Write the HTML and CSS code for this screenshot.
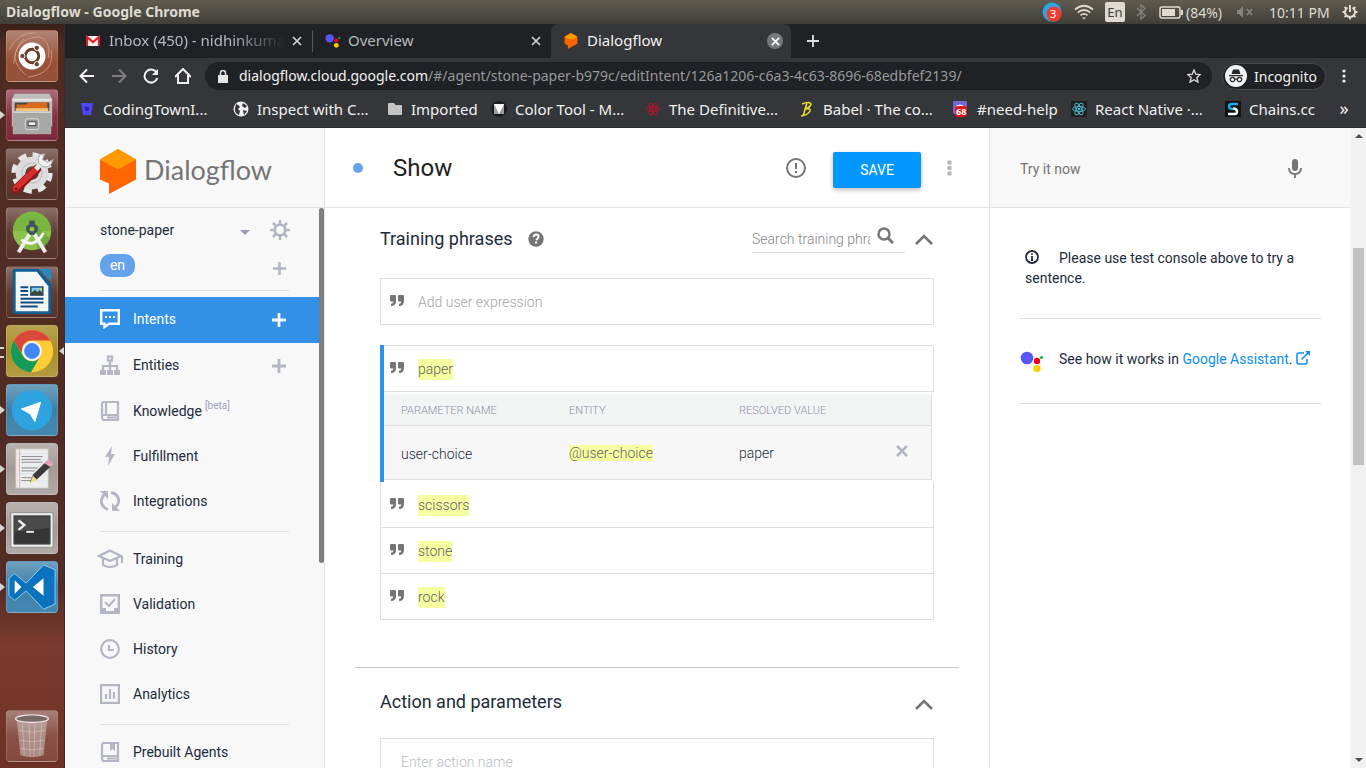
FILE: index.html
```html
<!DOCTYPE html>
<html lang="en">
<head>
<meta charset="utf-8">
<title>Dialogflow</title>
<link rel="stylesheet" href="styles.css">
</head>
<body>
<svg class="defs" aria-hidden="true">
  <defs>
    <symbol id="quote" viewBox="0 0 14 12"><path d="M1 0h4q1 0 1 1v5q0 5-5 5V8.800q2.300 0 2.300-2.300H1Q0 6.500 0 5.500V1q0-1 1-1zM9 0h4q1 0 1 1v5q0 5-5 5V8.800q2.300 0 2.300-2.300H9q-1 0-1-1V1q0-1 1-1z"/></symbol>
    <symbol id="plus" viewBox="0 0 14 14"><path d="M7 0v14M0 7h14" stroke="currentColor" stroke-width="2.800"/></symbol>
    <symbol id="close" viewBox="0 0 10 10"><path d="M1 1l8 8M9 1L1 9" stroke="currentColor" stroke-width="1.700"/></symbol>
    <symbol id="up" viewBox="0 0 18 11"><path d="M1 10l8-8 8 8" fill="none" stroke="#757575" stroke-width="2.600"/></symbol>
    <symbol id="assistant" viewBox="0 0 24 22"><circle cx="7" cy="7" r="6.300" fill="#5856f6"/><circle cx="17" cy="10" r="3.200" fill="#f0001c"/><circle cx="17" cy="17.500" r="3.600" fill="#fc0"/><circle cx="21.500" cy="6.500" r="1.600" fill="#0b4"/></symbol>
    <symbol id="cube" viewBox="0 0 36 45"><path d="M18 0l18 10.500v20L9 45V34.500L0 30.500v-20z" fill="#ff6500"/><path d="M18 0l18 10.500L18 20.500 0 10.500z" fill="#ff9a00"/></symbol>
    <symbol id="atom" viewBox="0 0 16 16"><g fill="none" stroke="currentColor" stroke-width="1"><ellipse cx="8" cy="8" rx="6.500" ry="2.500"/><ellipse cx="8" cy="8" rx="6.500" ry="2.500" transform="rotate(60 8 8)"/><ellipse cx="8" cy="8" rx="6.500" ry="2.500" transform="rotate(120 8 8)"/></g><circle cx="8" cy="8" r="1.300" fill="currentColor"/></symbol>
  </defs>
</svg>

<header class="panel">
  <span class="panel-title">Dialogflow - Google Chrome</span>
  <div class="tray">
    <span class="tg"><svg width="20" height="20"><circle cx="10" cy="10" r="9.500" fill="#2fa4e0"/><circle cx="12" cy="12" r="7.500" fill="#f33a33"/></svg><b>3</b></span>
    <svg class="tray-wifi" width="20" height="16" viewBox="0 0 20 16" fill="none" stroke="#dfdbd2" stroke-width="1.700"><path d="M1 5.500Q10-2 19 5.500M3.800 8.500q6.200-5 12.400 0M6.500 11.300q3.500-2.800 7 0"/><path d="M8 13.500h4l-2 2z" fill="#dfdbd2" stroke="none"/></svg>
    <span class="lang">En</span>
    <svg class="tray-bt" width="10" height="16" viewBox="0 0 10 16" fill="none" stroke="#85837b" stroke-width="1.300"><path d="M1 4l8 7.500L5 15V1l4 3.500L1 12"/></svg>
    <svg class="tray-bat" width="24" height="13" viewBox="0 0 24 13"><rect x="1" y="1" width="20" height="11" rx="2" fill="none" stroke="#dfdbd2" stroke-width="1.500"/><path d="M3 3h13v7H3zM22 4h2v5h-2z" fill="#dfdbd2"/></svg>
    <span class="tray-pct">(84%)</span>
    <svg class="tray-vol" width="18" height="12" viewBox="0 0 18 12"><path d="M1 4h2l4-4v12L3 8H1z" fill="#85837b"/><path d="M11 3l5 6M16 3l-5 6" stroke="#85837b" stroke-width="1.600"/></svg>
    <span class="tray-time">10:11 PM</span>
    <svg width="16" height="16" viewBox="0 0 16 16" fill="none" stroke="#dfdbd2"><path d="M5.500 3.700a5 5 0 1 0 5 0" stroke-width="2"/><path d="M8 1v7" stroke-width="2"/><path d="M2.500 3l2 1.500M13.500 3l-2 1.500M.5 8h3M12.500 8h3M2.500 13l2-1.500M13.500 13l-2-1.500M8 12.500v3" stroke-width="1.800"/></svg>
  </div>
</header>

<div class="desktop">
  <nav class="launcher" aria-label="Launcher">
    <button class="tile tile-dash" aria-label="Dash"><svg viewBox="0 0 52 52"><g fill="none" stroke="#dcae9b" stroke-width="1" opacity=".7"><path d="M7 34Q8 8 32 6q14 2 11 22M20 46Q-2 28 18 8M46 20q4 24-24 28M2 20Q12 0 30 2"/></g><circle cx="26" cy="26" r="14" fill="#fff"/><circle cx="26" cy="26" r="7" fill="none" stroke="#6b3b2a" stroke-width="3"/><g fill="#6b3b2a" stroke="#fff"><circle cx="16" cy="26" r="2.700"/><circle cx="31" cy="17.500" r="2.700"/><circle cx="31" cy="34.500" r="2.700"/></g></svg></button>
    <button class="tile tile-files run" aria-label="Files"><svg viewBox="0 0 52 52"><path d="M8 4h36l3 6v28H5V10z" fill="#bdbdbb"/><path d="M6 9h40v3H6z" fill="#e4e4e2"/><path d="M8 13h36v11H8z" fill="#4a4440"/><path d="M10 15h10l2-2h20v9H10z" fill="#d96b1c"/><path d="M9 19h34v3H9z" fill="#f5c37b"/><path d="M6 22h40v24H6z" fill="#a8a8a6"/><path d="M6 22h40v2H6z" fill="#d4d4d2"/><rect x="19" y="30" width="14" height="11" rx="2" fill="#999" stroke="#ddd"/><rect x="22" y="33" width="8" height="4" fill="#eee" stroke="#444"/></svg></button>
    <button class="tile tile-dark" aria-label="System Settings"><svg viewBox="0 0 52 52"><circle cx="26" cy="25" r="18" fill="none" stroke="#e5e5e5" stroke-width="7" stroke-dasharray="8 6.140"/><circle cx="26" cy="25" r="12" fill="none" stroke="#dcdcdc" stroke-width="10"/><circle cx="26" cy="25" r="10.500" fill="none" stroke="#b8b8b8"/><path d="M9 42L31 21" stroke="#8d1717" stroke-width="9" stroke-linecap="round"/><path d="M9 41L31 20" stroke="#d92e2e" stroke-width="6" stroke-linecap="round"/><path d="M30 21l6-6" stroke="#ececec" stroke-width="5"/><path d="M34 6q-4 9 3 12 8 3 11-7l-6 3-5-3 2-6z" fill="#f2f2f2" stroke="#aaa"/><circle cx="9.500" cy="41.500" r="1.500" fill="#711"/></svg></button>
    <button class="tile tile-dark" aria-label="Android Studio"><svg viewBox="0 0 52 52"><circle cx="26" cy="24" r="20" fill="#8dc34a"/><path d="M6 24a20 20 0 0 1 40 0z" fill="#79b641"/><path d="M28 16l17 16q-4 9-13 11z" fill="#679f38" opacity=".7"/><path d="M26 23L12 46M26 23l14 23" stroke="#eee" stroke-width="4"/><path d="M15 33q13 10 23-7" fill="none" stroke="#f5f5f5" stroke-width="3"/><path d="M23 13h6v4l3 2v5l-4 4h-4l-4-4v-5l3-2z" fill="#455"/><circle cx="26" cy="22" r="2.500" fill="#8dc34a"/></svg></button>
    <button class="tile tile-dark" aria-label="LibreOffice Writer"><svg viewBox="0 0 52 52"><path d="M8 2h25l13 16v31H8q-2 0-2-2V4q0-2 2-2z" fill="#0f5f96"/><path d="M9 5h22l12 15v26H9z" fill="#f4f6f7"/><path d="M34 2h12v13z" fill="#2a87bd"/><path d="M14 21h8M14 25h8M14 29h8M14 33h24M14 37h24M14 41h18" stroke="#124e7b" stroke-width="2"/><path d="M24 20h14v10H24z" fill="#124e7b"/><path d="M25.500 21.500h11v6h-11z" fill="#7ccdf0"/><path d="M25 29v-2l4-3 3 2 2-2 3 3v2z" fill="#443"/><circle cx="35" cy="23" r="1.200" fill="#fd0"/></svg></button>
    <button class="tile tile-chrome run focused" aria-label="Google Chrome"><svg viewBox="0 0 52 52"><circle cx="26" cy="26" r="22" fill="#fc3"/><path d="M7 15a22 22 0 0 1 38 0H26a11 11 0 0 0-9.500 5.500L15 28z" fill="#d9483b"/><path d="M7 15a22 22 0 0 0 18 33l9-15.500a10 10 0 0 1-17-1z" fill="#149b58"/><circle cx="26" cy="26" r="10.300" fill="#f5f5f5"/><circle cx="26" cy="26" r="8.200" fill="#4285f4"/></svg></button>
    <button class="tile tile-blue run" aria-label="Telegram"><svg viewBox="0 0 52 52"><circle cx="26" cy="26" r="21" fill="#2fa3df"/><path d="M15 25l20-7-6 20-5-8z" fill="#fff" stroke="#fff" stroke-linejoin="round"/></svg></button>
    <button class="tile tile-gray run" aria-label="Text Editor"><svg viewBox="0 0 52 52"><path d="M9 5h34v41H9z" fill="#ecedec" stroke="#bdb9b7"/><path d="M10 10h32M10 17h32M10 24h32M10 31h32M10 38h32" stroke="#dbe3ef"/><path d="M13 5v41" stroke="#edaaa6"/><path d="M15 13h22M15 16h20M15 19h22M15 25h17M15 28h14M15 35h12M15 38h10" stroke="#8b8b8b"/><path d="M24 40l3-8 14-14 5 5-15 14z" fill="#3b3b3b"/><path d="M39 20l4-4q4 1 5 5l-3 3z" fill="#e5a0bd"/><path d="M24 41l3-8 4 4z" fill="#eadf76"/></svg></button>
    <button class="tile tile-gray run" aria-label="Terminal"><svg viewBox="0 0 52 52"><path d="M4 10h44v36H4z" fill="#eee" stroke="#8a8a8a"/><path d="M7 13h38v30H7z" fill="#353535" stroke="#777"/><path d="M8 14h36v12L8 30z" fill="#4a4a4a"/><path d="M12 18l6 5-6 5" fill="none" stroke="#eee" stroke-width="2.500"/><path d="M20 30h8" stroke="#eee" stroke-width="2"/></svg></button>
    <button class="tile tile-blue run" aria-label="Visual Studio Code"><svg viewBox="0 0 52 52"><path d="M2 17l6-5 12 10L38 3l12 5v36l-12 5-18-19L8 40l-6-5z" fill="#0b72bd" stroke="#8dcef4"/><path d="M8 19v14l7-7zM38 17v18L27 26z" fill="#fff"/></svg></button>
    <button class="tile tile-trash" aria-label="Trash"><svg viewBox="0 0 52 52"><path d="M10 8h32l-4 38q-12 4-24 0z" fill="#d4ccca" opacity=".5"/><ellipse cx="26" cy="8" rx="17" ry="4" fill="#796a67" stroke="#e6dfdd" stroke-width="1.500"/><path d="M16 14l2 32M23 14l1 33M29 14l-1 33M36 14l-2 32M12 20q14 4 28 0M13 30q13 4 26 0M14 39q12 3 24 0" fill="none" stroke="#f3efee" stroke-width="1" opacity=".35"/></svg></button>
  </nav>

  <div class="browser">
    <div class="tabs">
      <div class="tab">
        <svg width="14" height="12" viewBox="0 0 14 12"><path d="M0 1h14v10H0z" fill="#f2f2f2"/><path d="M1 11V2l6 5 6-5v9" fill="none" stroke="#e02020" stroke-width="2.200"/></svg>
        <span class="tab-title fade">Inbox (450) - nidhinkumar</span>
        <button class="tab-x" aria-label="Close tab"><svg width="10" height="10"><use href="#close"/></svg></button>
      </div>
      <div class="tab split">
        <svg width="16" height="16"><use href="#assistant"/></svg>
        <span class="tab-title">Overview</span>
        <button class="tab-x" aria-label="Close tab"><svg width="10" height="10"><use href="#close"/></svg></button>
      </div>
      <div class="tab active">
        <svg width="14" height="16"><use href="#cube"/></svg>
        <span class="tab-title">Dialogflow</span>
        <button class="tab-x round" aria-label="Close tab"><svg width="9" height="9"><use href="#close"/></svg></button>
      </div>
      <button class="new-tab" aria-label="New tab"><svg width="12" height="12" viewBox="0 0 12 12"><path d="M6 0v12M0 6h12" stroke="#dedede" stroke-width="1.800"/></svg></button>
    </div>

    <div class="toolbar">
      <div class="nav-buttons">
        <button aria-label="Back"><svg width="16" height="16" viewBox="0 0 16 16" fill="none" stroke="#f1f1f1" stroke-width="2"><path d="M15 8H2M8 1.500L1.500 8 8 14.500"/></svg></button>
        <button aria-label="Forward"><svg width="16" height="16" viewBox="0 0 16 16" fill="none" stroke="#7e7e82" stroke-width="2"><path d="M1 8h13M8 1.500L14.500 8 8 14.500"/></svg></button>
        <button aria-label="Reload"><svg width="16" height="16" viewBox="0 0 16 16" fill="none" stroke="#f1f1f1" stroke-width="2"><path d="M13.500 4.500A6.500 6.500 0 1 0 14.300 10"/><path d="M15 1v6H9z" fill="#f1f1f1" stroke="none"/></svg></button>
        <button aria-label="Home"><svg width="16" height="16" viewBox="0 0 16 16" fill="none" stroke="#f1f1f1" stroke-width="2"><path d="M0 9l8-8 8 8M3 7v8h10V7"/></svg></button>
      </div>
      <div class="omnibox">
        <svg width="10" height="13" viewBox="0 0 10 13"><path d="M0 5h10v8H0z" fill="#e6e6e6"/><path d="M2.500 6V3a2.500 2.500 0 0 1 5 0v3" fill="none" stroke="#e6e6e6" stroke-width="1.500"/></svg>
        <div class="url" role="textbox" aria-label="Address"><span class="host">dialogflow.cloud.google.com</span>/#/agent/stone-paper-b979c/editIntent/126a1206-c6a3-4c63-8696-68edbfef2139/</div>
        <button aria-label="Bookmark this page"><svg width="14" height="14" viewBox="0 0 14 14"><path d="M7 1l1.800 4.200 4.400.4-3.300 3 1 4.400L7 10.700 3.100 13l1-4.400-3.300-3 4.400-.4z" fill="none" stroke="#d8d8d8" stroke-width="1.400"/></svg></button>
      </div>
      <button class="incognito"><svg width="22" height="22" viewBox="0 0 22 22"><circle cx="11" cy="11" r="11" fill="#f1f3f4"/><path d="M8 4.500h6L15.500 9h-9zM4 10h14v1.300H4z" fill="#27272b"/><g fill="none" stroke="#27272b" stroke-width="1.200"><circle cx="7.500" cy="14.500" r="2.200"/><circle cx="14.500" cy="14.500" r="2.200"/><path d="M9.500 14h3"/></g></svg>Incognito</button>
      <button class="kebab" aria-label="Menu"><svg width="4" height="14" fill="#f1f1f1"><circle cx="2" cy="2" r="1.600"/><circle cx="2" cy="7" r="1.600"/><circle cx="2" cy="12" r="1.600"/></svg></button>
    </div>

    <nav class="bookmarks" aria-label="Bookmarks">
      <a href="#"><svg viewBox="0 0 16 16"><path d="M2 2h12l-2 12H4z" fill="#4b48f3"/><path d="M6 6h4l-.5 4h-3z" fill="#2a1fa0"/></svg>CodingTownI...</a>
      <a href="#"><svg viewBox="0 0 16 16"><circle cx="8" cy="8" r="7.500" fill="#f1f1f1"/><path d="M3 3q3 1 4 3L5 8l2 2-1 4Q1 12 2 7zM10 2l-1 3 3 2 2-2zM10 9l4 1-3 4z" fill="#35353a"/></svg>Inspect with C...</a>
      <a href="#" class="narrow"><svg viewBox="0 0 16 16"><path d="M1 3q0-1 1-1h5l1.500 2H14q1 0 1 1v8q0 1-1 1H2q-1 0-1-1z" fill="#c4c4c4"/></svg>Imported</a>
      <a href="#"><svg viewBox="0 0 16 16"><circle cx="8" cy="8" r="8" fill="#1d1d1f"/><path d="M3 3h10v10H3z" fill="#9d9d9d"/><path d="M3 3h10L8 13z" fill="#fff"/></svg>Color Tool - M...</a>
      <a href="#" class="red"><svg><use href="#atom"/></svg>The Definitive...</a>
      <a href="#"><svg viewBox="0 0 16 16"><path d="M3 3q8-3 9 0-1 4-6 5 6-1 5 2-2 4-9 5M8 2L4 15" fill="none" stroke="#f0dd27" stroke-width="1.600"/></svg>Babel · The co...</a>
      <a href="#" class="medium"><span class="badge-icon"><svg viewBox="0 0 16 16"><rect width="14" height="13" rx="1" fill="#7566d1"/><path d="M3 5q4-3 8 0v4H3z" fill="#fff"/></svg><b>68</b></span>#need-help</a>
      <a href="#" class="cyan"><svg><use href="#atom"/></svg>React Native ·...</a>
      <a href="#" class="narrow"><svg viewBox="0 0 16 16"><path d="M0 0h16v16H0z" fill="#111"/><path d="M13 3H7Q4 3 4 5.500T8 8" fill="none" stroke="#12aeea" stroke-width="2.500"/><path d="M8 7.500q4 0 4 3T9 13H3" fill="none" stroke="#fff" stroke-width="2.500"/></svg>Chains.cc</a>
      <button class="more" aria-label="More bookmarks">»</button>
    </nav>

    <div class="page">
      <aside class="sidebar">
        <div class="brand"><svg width="36" height="45"><use href="#cube"/></svg><span>Dialogflow</span></div>
        <div class="side-body">
          <div class="side-list">
            <div class="agent">
              <label class="agent-pick"><select aria-label="Agent"><option>stone-paper</option></select><svg width="10" height="5"><path d="M0 0h10L5 5z" fill="#9a9ab0"/></svg></label>
              <button aria-label="Agent settings"><svg width="20" height="20" viewBox="0 0 20 20" fill="none" stroke="#b4b6c4"><circle cx="10" cy="10" r="5.300" stroke-width="2.800"/><path d="M10 0v4M10 16v4M0 10h4M16 10h4M3 3l3 3M14 14l3 3M17 3l-3 3M6 14l-3 3" stroke-width="2.600"/></svg></button>
            </div>
            <div class="locale"><span>en</span><button aria-label="Add language"><svg width="13" height="13"><use href="#plus"/></svg></button></div>
            <hr class="side-line first">
            <div class="item on"><a href="#"><svg viewBox="0 0 20 20"><path d="M1.200 1.200h17.600v13.500H9L4.500 18v-3.300H1.200z" fill="none" stroke="#fff" stroke-width="2.400"/><path d="M5 7h2v2H5zM9 7h2v2H9zM13 7h2v2h-2z" fill="#fff"/></svg>Intents</a><button aria-label="Create intent"><svg width="14" height="14"><use href="#plus"/></svg></button></div>
            <div class="item on-size"><a href="#"><svg viewBox="0 0 20 20"><path d="M8 1.500h4v4H8zM10 6v10M3 16v-5h14v5" fill="none" stroke="#b4b6c4" stroke-width="2.200"/><path d="M0 15h6v5H0zM7 15h6v5H7zM14 15h6v5h-6z" fill="#b4b6c4"/></svg>Entities</a><button aria-label="Create entity"><svg width="14" height="14"><use href="#plus"/></svg></button></div>
            <div class="item"><a href="#"><svg viewBox="0 0 20 20" fill="none" stroke="#b4b6c4" stroke-width="2.200"><path d="M18 14H4q-2 0-2 2.500T4 19h14V1H4Q2 1 2 3v13M6 2v12M7 16.500h10"/></svg>Knowledge<sup>[beta]</sup></a></div>
            <div class="item"><a href="#"><svg viewBox="0 0 20 20"><path d="M12 0L5 11h4l-1 9 7-12h-4z" fill="#b4b6c4"/></svg>Fulfillment</a></div>
            <div class="item"><a href="#"><svg viewBox="0 0 20 20"><path d="M8 18.500Q1 16 1.300 9 2 5 5 3M11 1.500q8 1.500 7.700 9-.7 4-3.700 6" fill="none" stroke="#b4b6c4" stroke-width="2.800"/><path d="M0 0h8v8zM20 20h-8v-8z" fill="#b4b6c4"/></svg>Integrations</a></div>
            <hr class="side-line">
            <div class="item"><a href="#"><svg class="wide" viewBox="0 0 26 20" fill="none" stroke="#b4b6c4" stroke-width="2.200"><path d="M2 7l11-5.500L24 7l-11 5zM6 9v7q7 4 14 0V9M25 6.500V14"/></svg>Training</a></div>
            <div class="item"><a href="#"><svg viewBox="0 0 20 20"><path d="M1.200 1.200h17.600v17.600H1.200z" fill="none" stroke="#b4b6c4" stroke-width="2.400"/><path d="M1 14h5v3h8v-3h5v5H1z" fill="#b4b6c4"/><path d="M5 8l4 4 6-7" fill="none" stroke="#b4b6c4" stroke-width="2"/></svg>Validation</a></div>
            <div class="item"><a href="#"><svg viewBox="0 0 20 20" fill="none" stroke="#b4b6c4" stroke-width="2.200"><circle cx="10" cy="10" r="8.800"/><path d="M9 6v5h5"/></svg>History</a></div>
            <div class="item"><a href="#"><svg viewBox="0 0 20 20" fill="none" stroke="#b4b6c4" stroke-width="2.200"><path d="M1.100 1.100h17.800v17.800H1.100zM6 10v5M10 5v10M14 8v7"/></svg>Analytics</a></div>
            <hr class="side-line">
            <div class="item"><a href="#"><svg viewBox="0 0 20 20" fill="none" stroke="#b4b6c4" stroke-width="2.200"><path d="M18 14H4q-2 0-2 2.500T4 19h14V1H4Q2 1 2 3v13M7 16.500h10"/><path d="M10 1h5v8l-2.500-2L10 9z" fill="#b4b6c4" stroke="none"/></svg>Prebuilt Agents</a></div>
          </div>
          <div class="side-scroll"></div>
        </div>
      </aside>

      <main class="main">
        <div class="intent-head">
          <span class="dot"></span>
          <h1>Show</h1>
          <svg class="warn" width="20" height="20" viewBox="0 0 20 20" fill="none" stroke="#757575" stroke-width="2"><circle cx="10" cy="10" r="9"/><path d="M10 5v6M10 13v2"/></svg>
          <button class="save">SAVE</button>
          <button class="intent-menu" aria-label="Intent menu"><svg width="5" height="16" fill="#b4b6c4"><circle cx="2.500" cy="2.500" r="2.300"/><circle cx="2.500" cy="8" r="2.300"/><circle cx="2.500" cy="13.500" r="2.300"/></svg></button>
        </div>
        <section class="training">
          <div class="section-head">
            <h2>Training phrases</h2>
            <svg class="help" width="16" height="16" viewBox="0 0 16 16"><circle cx="8" cy="8" r="7.700" fill="#757575"/><path d="M5.700 6q0-2.500 2.500-2.500t2.300 2.300Q10.500 7 8.200 9" fill="none" stroke="#fff" stroke-width="2"/><path d="M7 10.500h2.200v2H7z" fill="#fff"/></svg>
            <div class="search"><input aria-label="Search training phrases" placeholder="Search training phrases"><svg width="17" height="17" viewBox="0 0 17 17" fill="none" stroke="#757575"><circle cx="7" cy="7" r="5.500" stroke-width="2.400"/><path d="M11 11l5 5" stroke-width="3"/></svg></div>
            <button aria-label="Collapse training phrases"><svg width="18" height="11"><use href="#up"/></svg></button>
          </div>
          <div class="entry"><svg class="q"><use href="#quote"/></svg><input aria-label="Add user expression" placeholder="Add user expression"></div>
          <div class="phrases">
            <div class="expanded">
              <div class="entry"><svg class="q"><use href="#quote"/></svg><mark>paper</mark></div>
              <table class="params">
                <thead><tr><th>PARAMETER NAME</th><th>ENTITY</th><th>RESOLVED VALUE</th><th></th></tr></thead>
                <tbody><tr><td class="name">user-choice</td><td><mark>@user-choice</mark></td><td>paper</td><td><button aria-label="Remove parameter"><svg width="12" height="12" viewBox="0 0 12 12"><path d="M1 1l10 10M11 1L1 11" stroke="#b4b6c4" stroke-width="2.600"/></svg></button></td></tr></tbody>
              </table>
            </div>
            <div class="phrase"><svg class="q"><use href="#quote"/></svg><mark>scissors</mark></div>
            <div class="phrase"><svg class="q"><use href="#quote"/></svg><mark>stone</mark></div>
            <div class="phrase"><svg class="q"><use href="#quote"/></svg><mark>rock</mark></div>
          </div>
        </section>
        <section class="actions">
          <div class="section-head">
            <h2>Action and parameters</h2>
            <button aria-label="Collapse action and parameters"><svg width="18" height="11"><use href="#up"/></svg></button>
          </div>
          <div class="entry action"><input aria-label="Action name" placeholder="Enter action name"></div>
        </section>
      </main>

      <aside class="console">
        <div class="try"><input aria-label="Try it now" placeholder="Try it now"><button aria-label="Speak"><svg width="14" height="20" viewBox="0 0 14 20"><rect x="4" width="6" height="12" rx="3" fill="#757575"/><path d="M1 9q0 6 6 6t6-6M7 15v4" fill="none" stroke="#757575" stroke-width="1.800"/></svg></button></div>
        <p class="note"><svg width="14" height="14" viewBox="0 0 14 14" fill="none" stroke="#222b3a"><circle cx="7" cy="7" r="6" stroke-width="1.800"/><path d="M7 3.300v1.500M7 6v5" stroke-width="1.800"/></svg>Please use test console above to try a sentence.</p>
        <div class="how"><svg width="24" height="22"><use href="#assistant"/></svg><span>See how it works in <a href="#">Google Assistant</a>. <svg width="14" height="14" viewBox="0 0 14 14" fill="none" stroke="#0b8dee" stroke-width="1.500"><path d="M8 2H3Q1 2 1 4v7q0 2 2 2h6q2 0 2-2V8M5.500 8.500L12 2"/><path d="M9 0h5v5z" fill="#0b8dee" stroke="none"/></svg></span></div>
      </aside>

      <div class="page-scroll" aria-hidden="true">
        <svg width="8" height="5"><path d="M0 5l4-4 4 4z" fill="#505050"/></svg>
        <div class="thumb"></div>
        <svg width="8" height="5"><path d="M0 0h8L4 4z" fill="#505050"/></svg>
      </div>
    </div>
  </div>
</div>
</body>
</html>
```

FILE: styles.css
```css
* { box-sizing: border-box; }
body {
  margin: 0;
  height: 100vh;
  overflow: hidden;
  display: flex;
  flex-direction: column;
  font-family: Roboto, "Liberation Sans", sans-serif;
  font-size: 14px;
  color: #222b3a;
}
.defs { position: absolute; width: 0; height: 0; }
button { border: 0; background: none; padding: 0; margin: 0; font: inherit; color: inherit; display: flex; align-items: center; justify-content: center; }
input, select { border: 0; background: none; padding: 0; margin: 0; font: inherit; color: inherit; outline: 0; min-width: 0; }
a { color: inherit; text-decoration: none; }
svg { flex: none; }
h1, h2, p { margin: 0; font-weight: 400; }

/* Desktop panel */
.panel {
  height: 24px;
  flex: none;
  display: flex;
  align-items: center;
  justify-content: space-between;
  padding: 0 8px 2px 6px;
  background: linear-gradient(#5f5c4f, #3f3e39);
  color: #dfdbd2;
  font-family: "Noto Sans", sans-serif;
  font-size: 14px;
}
.panel-title { font-weight: 700; font-size: 14px; }
.tray { display: flex; align-items: center; padding-top: 2px; }
.tg { position: relative; display: flex; }
.tg b { position: absolute; left: 8px; top: 5px; font-size: 11px; line-height: 14px; font-weight: 400; color: #fff; }
.tray-wifi { margin-left: 12px; }
.lang { margin-left: 11px; width: 20px; line-height: 20px; border-radius: 2px; background: #dfdbd2; color: #3f3e39; text-align: center; font-size: 13px; }
.tray-bt { margin-left: 11px; }
.tray-bat { margin-left: 13px; }
.tray-pct { margin-left: 3px; width: 38px; white-space: nowrap; }
.tray-vol { margin-left: 12px; }
.tray-time { margin: 0 12px 0 15px; width: 61px; white-space: nowrap; }

.desktop { flex: 1; min-height: 0; display: flex; }

/* Launcher */
.launcher {
  width: 65px;
  flex: none;
  display: flex;
  flex-direction: column;
  align-items: center;
  gap: 7px;
  padding: 6px 1px 6px 0;
  border-right: 1px solid #3c2b2a;
  background: linear-gradient(#3a2019, #4f2b22 24px, #532d25 560px, #7a3a2d 620px, #6d3225);
}
.tile {
  position: relative;
  width: 52px;
  height: 52px;
  border-radius: 4px;
  border: 1px solid rgba(255, 255, 255, .15);
}
.tile svg { width: 50px; height: 50px; }
.tile-dash { background: linear-gradient(#b08573, #9a5138 60%, #945139); }
.tile-files { background: linear-gradient(#a9707b, #8b2f42 50%, #7c2a3c); }
.tile-dark { background: linear-gradient(#8b7069, #5f3d34 50%, #543229); }
.tile-chrome { background: linear-gradient(#b7a352, #a88f2c 50%, #b39c40); }
.tile-blue { background: linear-gradient(#6ea0bd, #3f7fa6 50%, #4688b0); }
.tile-gray { background: linear-gradient(#b9b2b0, #a39a97 50%, #b1aaa8); }
.tile-trash { margin-top: auto; background: linear-gradient(#a6807a, #8a5147 50%, #84493e); }
.run::before { content: ""; position: absolute; left: -7px; top: 21px; border: 4px solid transparent; border-left: 5px solid #d9d4d2; border-right: 0; }
.focused::before { height: 7px; border: solid #d9d4d2; border-width: 2px 0; width: 4px; }
.focused::after { content: ""; position: absolute; right: -7px; top: 21px; border: 4px solid transparent; border-right: 5px solid #d9d4d2; border-left: 0; }

/* Browser chrome */
.browser { flex: 1; min-width: 0; display: flex; flex-direction: column; background: #35363a; color: #f1f1f1; font-family: "Noto Sans", sans-serif; }
.tabs { height: 34px; flex: none; display: flex; padding-left: 8px; background: #202124; font-size: 15px; }
.tab { width: 239px; display: flex; align-items: center; padding: 0 7px 0 13px; color: #b5b8bd; }
.tab-title { flex: 1; margin-left: 9px; padding-bottom: 2px; white-space: nowrap; overflow: hidden; }
.split .tab-title { margin-left: 7px; }
.fade { mask-image: linear-gradient(to right, #000 70%, transparent); }
.split { border-image: linear-gradient(transparent 20%, #55565a 20% 80%, transparent 80%) 1; border-left: 1px solid; padding-left: 12px; }
.tab-x { width: 16px; height: 16px; margin-left: 4px; border-radius: 50%; color: #d0d2d5; flex: none; }
.round { background: #77787c; color: #fff; }
.active { width: 240px; background: #35363a; color: #f1f1f1; border-radius: 8px 8px 0 0; padding-right: 8px; }
.new-tab { width: 44px; }
.toolbar { height: 34px; flex: none; display: flex; align-items: center; padding: 2px 16px 0 14px; }
.nav-buttons { display: flex; gap: 16px; }
.omnibox { flex: 1; min-width: 0; height: 28px; margin: 0 10px 0 14px; padding: 0 11px 0 13px; border-radius: 14px; background: #202124; display: flex; align-items: center; }
.url { flex: 1; min-width: 0; margin-left: 11px; padding-bottom: 2px; font-size: 14px; white-space: nowrap; overflow: hidden; color: #96999d; }
.host { color: #f1f1f1; }
.incognito { height: 27px; padding: 0 8px 0 2px; gap: 7px; border: 1px solid #47484c; border-radius: 14px; background: #202124; font-size: 14px; }
.kebab { width: 12px; margin-left: 12px; }
.bookmarks { height: 36px; flex: none; display: flex; align-items: center; padding: 0 12px 2px 14px; font-size: 15px; border-bottom: 1px solid #27282b; }
.bookmarks a { width: 154px; flex: none; display: flex; align-items: center; gap: 8px; white-space: nowrap; }
.bookmarks .narrow { width: 104px; }
.bookmarks .medium { width: 118px; }
.bookmarks svg { width: 16px; height: 16px; }
.bookmarks .more { width: 20px; margin-left: auto; padding-bottom: 2px; font-size: 18px; }
.red svg { color: #b3152b; }
.cyan svg { color: #47b6c8; background: #1e1f21; }
.badge-icon { position: relative; display: flex; }
.badge-icon b { position: absolute; left: 2px; top: 5px; padding: 0 1px; border-radius: 3px; background: #e3141b; color: #fff; font-size: 9px; line-height: 11px; }

/* Page */
.page { flex: 1; min-height: 0; display: flex; background: #fff; color: #222b3a; font-family: Roboto, "Liberation Sans", sans-serif; }
.sidebar { width: 260px; flex: none; display: flex; flex-direction: column; background: #f8f8f8; border-right: 1px solid #e3e3e3; }
.brand { height: 80px; flex: none; display: flex; align-items: center; gap: 8px; padding: 7px 0 0 35px; border-bottom: 1px solid #e3e3e3; color: #757575; font-family: Lato, sans-serif; font-size: 27px; }
.brand span { padding-bottom: 3px; }
.side-body { flex: 1; min-height: 0; display: flex; }
.side-list { flex: 1; min-width: 0; overflow: hidden; }
.side-scroll { width: 5px; height: 355px; border-radius: 3px; background: #7f7f7f; }
.agent { height: 44px; display: flex; align-items: center; padding: 0 29px 0 35px; }
.agent-pick { flex: 1; display: flex; align-items: center; margin-right: 20px; }
.agent-pick select { flex: 1; appearance: none; }
.agent-pick svg { margin-top: 4px; }
.locale { height: 29px; display: flex; align-items: center; justify-content: space-between; padding: 0 33px 2px 35px; }
.locale span { width: 35px; line-height: 23px; border-radius: 10px; background: #64a2ec; color: #fff; text-align: center; }
.locale button, .item button { color: #b4b6c4; }
.locale button { padding-top: 6px; }
.side-line { height: 1px; margin: 7px 30px 5px 35px; border: 0; background: #dfdfdf; }
.side-line.first { margin: 9px 30px 6px 35px; }
.item { height: 45px; display: flex; align-items: center; padding: 0 33px 0 35px; }
.item a { flex: 1; display: flex; align-items: center; gap: 13px; padding-bottom: 2px; white-space: nowrap; }
.item a svg { width: 20px; height: 20px; }
.item a .wide { width: 26px; margin: 0 -3px; }
.item sup { margin: 0 0 9px -10px; font-size: 10px; line-height: 10px; color: #a0a3b8; }
.on, .on-size { height: 46px; }
.on { background: #3290e6; color: #fff; }
.item.on button { color: #fff; }

.main { flex: 1; min-width: 0; overflow: hidden; }
.intent-head { height: 80px; display: flex; align-items: center; padding: 0 37px 0 28px; border-bottom: 1px solid #e3e3e3; }
.dot { width: 10px; height: 10px; border-radius: 50%; background: #64a2ec; }
h1 { flex: 1; margin-left: 30px; font-size: 24px; color: #212121; }
.save { width: 88px; height: 36px; margin: 4px 26px 0 27px; border-radius: 2px; background: #0397ff; color: #fff; box-shadow: 0 2px 5px rgba(0, 0, 0, .26); }
.training { margin: 0 30px; padding: 10px 25px 47px; border-bottom: 1px solid #c8c4c5; }
.section-head { height: 42px; display: flex; align-items: center; padding-right: 1px; }
h2 { padding-bottom: 2px; font-size: 18px; }
.help { margin-left: 15px; }
.search { width: 153px; height: 28px; margin: 0 10px 0 auto; display: flex; align-items: flex-start; border-bottom: 1px solid #d9d9d9; }
.search input { width: 118px; height: 28px; margin-right: 7px; font-weight: 300; color: #757575; }
.search svg { margin-top: 2px; }
.entry { height: 47px; display: flex; align-items: center; padding-left: 9px; border: 1px solid #dedede; }
.training > .section-head + .entry { margin-top: 18px; }
.entry input { flex: 1; font-weight: 300; }
.q { width: 14px; height: 12px; margin: 0 14px 2px 0; fill: #757575; }
input::placeholder { color: #a5a5a5; opacity: 1; }
.search input::placeholder { color: #858585; }
mark { background: #f8ffa0; color: #5f6368; font-weight: 300; line-height: 21px; }
.phrase mark, .entry mark { margin-top: 2px; }
.phrases { margin-top: 20px; }
.expanded { padding-bottom: 2px; border-left: 4px solid #3290e6; }
.expanded .entry { padding-left: 6px; border-left: 0; }
.params { width: calc(100% - 2px); margin-top: 2px; border-collapse: separate; border-spacing: 0; table-layout: fixed; border-right: 1px solid #dedede; background: #f7f7f7; }
.params th { height: 32px; padding: 2px 0 0; background: #f3f5f5; border-bottom: 1px solid #dfe1e1; font-size: 11px; font-weight: 300; color: #8d90a5; text-align: left; }
.params td { height: 54px; padding: 0; border-bottom: 1px solid #dedede; font-weight: 300; }
.params th:first-child { width: 185px; }
.params th:nth-child(2) { width: 170px; }
.params th:first-child, .params td:first-child { padding-left: 17px; }
.params td.name { padding-top: 2px; }
.params th:last-child { width: 35px; }
.params td button { padding-bottom: 3px; }
.params mark { line-height: 16px; }
.phrase { height: 46px; display: flex; align-items: center; padding-left: 9px; border: 1px solid #dedede; border-top: 0; }
.actions { padding: 13px 55px 0; }
.section-head > button { margin-left: auto; padding-top: 4px; }
.section-head > .search + button { margin-left: 0; padding-top: 0; }
.action { margin-top: 15px; padding-left: 20px; }
.action input::placeholder { color: #babdc7; }

.console { width: 362px; flex: none; border-left: 1px solid #e3e3e3; }
.try { height: 80px; display: flex; align-items: center; padding: 2px 49px 0 30px; background: #f8f8f8; border-bottom: 1px solid #e3e3e3; }
.try input { flex: 1; }
.try input::placeholder { color: #757575; }
.note { margin: 0 30px; padding: 40px 0 30px 5px; border-bottom: 1px solid #dcdcdc; line-height: 20px; }
.note svg { margin-right: 20px; vertical-align: -1px; }
.how { margin: 0 30px; height: 85px; display: flex; align-items: center; gap: 15px; border-bottom: 1px solid #dcdcdc; }
.how > svg { margin-top: 1px; }
.how span { padding-bottom: 5px; }
.how span svg { vertical-align: -1px; }
.how a { color: #0b8dee; }
.page-scroll { width: 15px; flex: none; display: flex; flex-direction: column; align-items: center; padding: 5px 0; background: #f1f1f1; }
.thumb { width: 11px; height: 217px; margin: 110px 0 auto; background: #c1c1c1; }
```
